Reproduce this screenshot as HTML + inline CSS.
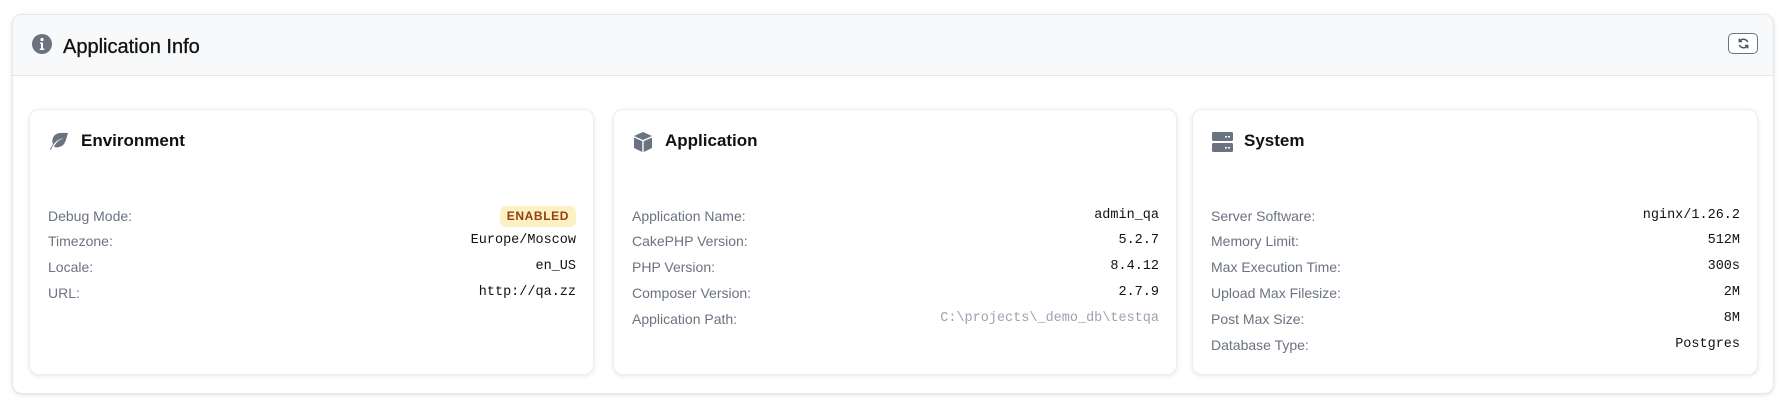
<!DOCTYPE html>
<html><head><meta charset="utf-8"><style>
*{box-sizing:border-box;margin:0;padding:0}
body{width:1787px;height:405px;background:#fff;font-family:"Liberation Sans",sans-serif;position:relative;overflow:hidden}
.outer{position:absolute;left:12px;top:14px;width:1762px;height:380px;border:1px solid #e5e7eb;border-radius:10px;box-shadow:0 1px 4px rgba(0,0,0,.12);background:#fff;overflow:hidden}
.head{height:61px;background:#f8f9fa;border-bottom:1px solid #e3e5e8;position:relative}
.head h1{position:absolute;left:50px;top:21px;font-size:20px;font-weight:normal;color:#111;-webkit-text-stroke:.3px #111}
.head .ic{position:absolute;left:19px;top:19px}
.btn{position:absolute;right:15px;top:18px;width:30px;height:21px;border:1px solid #6b7280;border-radius:5px;background:#fff;display:flex;align-items:center;justify-content:center}
.card{position:absolute;top:109px;height:266px;border:1px solid #eceef0;border-radius:10px;box-shadow:0 1px 5px rgba(0,0,0,.1);background:#fff}
.card h2{position:absolute;left:51px;top:21px;font-size:17px;font-weight:bold;color:#111}
.card .ci{position:absolute;left:18px;top:21px}
.row{position:absolute;left:18px;right:17px;height:20px;font-size:14px;color:#6b7280;line-height:20px}
.row .v{position:absolute;right:0;top:0;font-family:"Liberation Mono",monospace;font-size:13.5px;color:#111}
.badge{background:#fdf0c4;border-radius:6px;padding:0 7px;font-family:"Liberation Sans",sans-serif!important;font-size:12px!important;font-weight:bold;letter-spacing:.6px;height:21px;line-height:21px;color:#92400e!important}
</style></head><body>
<div class="outer">
 <div class="head">
  <svg class="ic" width="20" height="20" viewBox="0 0 20 20"><circle cx="10" cy="10" r="10" fill="#6b7280"/><circle cx="10" cy="5.5" r="1.6" fill="#fff"/><path d="M8 8.5h3v6h1.3v1.5H7.8v-1.5H9v-4.5H8z" fill="#fff"/></svg>
  <h1>Application Info</h1>
  <div class="btn"><svg width="13" height="13" viewBox="0 0 14 14" fill="none" stroke="#4b5563" stroke-width="1.6"><path d="M11.5 5.5A5 5 0 0 0 2.8 4.5M2.5 8.5a5 5 0 0 0 8.7 1"/><path d="M2.5 1.8v3h3M11.5 12.2v-3h-3"/></svg></div>
 </div>
</div>
<div class="card" style="left:29px;width:565px">
 <svg class="ci" width="22" height="20" viewBox="0 0 22 20"><path d="M3 19c2-7 7-11 13-12-6 2-9 6-10 9 3 1 8 0 10-3s3-8 4-11C16 2 9 1 6 5c-2 3-2 6-1 8L2 18z" fill="#6b7280"/></svg>
 <h2>Environment</h2>
 <div class="row" style="top:96px">Debug Mode:<span class="v badge">ENABLED</span></div>
 <div class="row" style="top:121px">Timezone:<span class="v">Europe/Moscow</span></div>
 <div class="row" style="top:147px">Locale:<span class="v">en_US</span></div>
 <div class="row" style="top:173px">URL:<span class="v">http://qa.zz</span></div>
</div>
<div class="card" style="left:613px;width:564px">
 <svg class="ci" width="22" height="22" viewBox="0 0 22 22"><path d="M11 1l9 4-9 4-9-4z" fill="#6b7280"/><path d="M2 6.5l8.3 3.7V21L2 17z" fill="#6b7280"/><path d="M20 6.5l-8.3 3.7V21L20 17z" fill="#6b7280"/></svg>
 <h2>Application</h2>
 <div class="row" style="top:96px">Application Name:<span class="v">admin_qa</span></div>
 <div class="row" style="top:121px">CakePHP Version:<span class="v">5.2.7</span></div>
 <div class="row" style="top:147px">PHP Version:<span class="v">8.4.12</span></div>
 <div class="row" style="top:173px">Composer Version:<span class="v">2.7.9</span></div>
 <div class="row" style="top:199px">Application Path:<span class="v" style="color:#9ca3af">C:\projects\_demo_db\testqa</span></div>
</div>
<div class="card" style="left:1192px;width:566px">
 <svg class="ci" width="22" height="22" viewBox="0 0 22 22"><rect x="1" y="1" width="21" height="9" rx="1.5" fill="#6b7280"/><rect x="1" y="12" width="21" height="9" rx="1.5" fill="#6b7280"/><rect x="14" y="5" width="2" height="1.5" fill="#fff"/><rect x="17" y="5" width="2" height="1.5" fill="#fff"/><rect x="14" y="16" width="2" height="1.5" fill="#fff"/><rect x="17" y="16" width="2" height="1.5" fill="#fff"/></svg>
 <h2>System</h2>
 <div class="row" style="top:96px">Server Software:<span class="v">nginx/1.26.2</span></div>
 <div class="row" style="top:121px">Memory Limit:<span class="v">512M</span></div>
 <div class="row" style="top:147px">Max Execution Time:<span class="v">300s</span></div>
 <div class="row" style="top:173px">Upload Max Filesize:<span class="v">2M</span></div>
 <div class="row" style="top:199px">Post Max Size:<span class="v">8M</span></div>
 <div class="row" style="top:225px">Database Type:<span class="v">Postgres</span></div>
</div>
</body></html>
